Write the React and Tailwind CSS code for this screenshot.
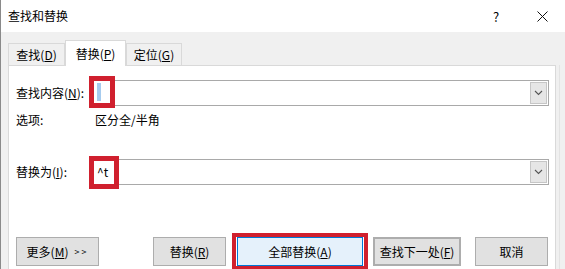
import React from 'react';

const font = "font-['Noto_Sans_CJK_SC','Noto_Sans',sans-serif]";

const Key = ({ children }) => <span className="underline underline-offset-[1px]">{children}</span>;

const Tab = ({ label, k, active = false, width }) => (
  <div
    className={`flex items-center justify-center border border-b-0 border-[#d9d9d9] ${width} ${
      active ? 'relative z-10 -mb-[1px] h-[26px] bg-white' : 'h-[22px] bg-[#f0f0f0]'
    }`}
  >
    {label}(<Key>{k}</Key>)
  </div>
);

const Chevron = () => (
  <svg width="9" height="6" viewBox="0 0 9 6">
    <path d="M1 1 L4.5 4.5 L8 1" fill="none" stroke="#555" strokeWidth="1.1" />
  </svg>
);

const Combo = ({ children, mark }) => (
  <div className="relative flex h-[26px] w-[459px] border border-[#a9a9a9] bg-white">
    <div className="flex flex-1 items-center pl-[6px]">{children}</div>
    <div className="my-[1px] mr-[1px] flex w-[17px] items-center justify-center border border-[#c6c6c6] bg-[#e6e6e6]">
      <Chevron />
    </div>
    {mark}
  </div>
);

const Button = ({ children, className = '' }) => (
  <div
    className={`flex h-[29px] items-center justify-center border border-[#adadad] bg-[#e1e1e1] ${className}`}
  >
    {children}
  </div>
);

export default function App() {
  return (
    <div
      className={`flex h-[269px] w-[565px] flex-col overflow-hidden border-l border-[#8a8a8a] bg-[#f0f0f0] text-[12px] leading-none text-black ${font}`}
    >
      {/* Title bar */}
      <div className="flex h-[32px] shrink-0 items-center bg-white pl-[7px]">
        <span>查找和替换</span>
        <div className="ml-auto flex h-full">
          <div className="flex w-[46px] items-center justify-center text-[13px]">?</div>
          <div className="flex w-[46px] items-center justify-center">
            <svg width="11" height="11" viewBox="0 0 11 11">
              <path d="M0.5 0.5 L10.5 10.5 M10.5 0.5 L0.5 10.5" stroke="#111" strokeWidth="1" />
            </svg>
          </div>
        </div>
      </div>

      {/* Tabs */}
      <div className="flex h-[33px] shrink-0 items-end pl-[7px]">
        <Tab label="查找" k="D" width="w-[57px]" />
        <Tab label="替换" k="P" width="w-[61px]" active />
        <Tab label="定位" k="G" width="w-[56px]" />
      </div>

      {/* Panel */}
      <div className="flex flex-1">
        <div className="ml-[7px] flex w-[548px] flex-col border border-[#d9d9d9] bg-white pl-[7px]">
          <div className="mt-[14px] flex h-[26px] items-center">
            <div className="w-[74px]">
              查找内容(<Key>N</Key>):
            </div>
            <Combo
              mark={
                <>
                  <div className="absolute left-[6px] top-[2px] h-[18px] w-[4px] bg-[#a6cbee]" />
                  <div className="absolute -left-[2px] -top-[5px] h-[32px] w-[26px] border-[5px] border-[#d0202e]" />
                </>
              }
            />
          </div>

          <div className="mt-[6px] flex h-[16px] items-center">
            <div className="w-[79px]">选项:</div>
            <div>区分全/半角</div>
          </div>

          <div className="mt-[31px] flex h-[26px] items-center">
            <div className="w-[74px]">
              替换为(<Key>I</Key>):
            </div>
            <Combo
              mark={
                <div className="absolute -left-[2px] -top-[4px] h-[33px] w-[30px] border-[5px] border-[#d0202e]" />
              }
            >
              ^t
            </Combo>
          </div>

          {/* Buttons */}
          <div className="mt-[48px] flex h-[37px] items-center">
            <Button className="w-[83px] gap-[6px]">
              <span>
                更多(<Key>M</Key>)
              </span>
              <span className="text-[9px] tracking-[2px]">&gt;&gt;</span>
            </Button>
            <Button className="ml-[54px] w-[73px]">
              替换(<Key>R</Key>)
            </Button>
            <div className="ml-[6px] flex h-[37px] w-[136px] items-center border-[4px] border-[#d0202e] px-[1px]">
              <div className="flex h-[29px] flex-1 items-center justify-center border border-[#0078d7] bg-[#e5f1fb]">
                全部替换(<Key>A</Key>)
              </div>
            </div>
            <Button className="ml-[5px] w-[88px] border-2 border-[#0078d7]">
              查找下一处(<Key>F</Key>)
            </Button>
            <Button className="ml-[14px] w-[73px]">取消</Button>
          </div>
        </div>
        <div className="ml-[3px] w-[1px] bg-[#e3e3e3]" />
      </div>
    </div>
  );
}
